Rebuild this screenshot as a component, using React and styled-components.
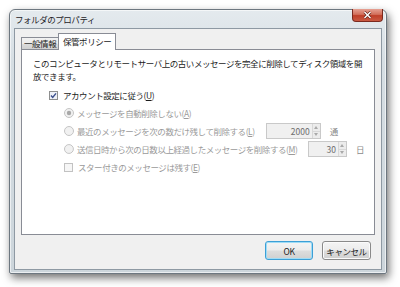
import React from 'react'
import styled, { createGlobalStyle } from 'styled-components'

const Global = createGlobalStyle`
  html, body {
    margin: 0;
    padding: 0;
    background: #ffffff;
  }
  body {
    font-family: "Noto Sans CJK JP", "Noto Sans", sans-serif;
    font-size: 8.5px;
    letter-spacing: -0.45px;
    color: #1b1b1b;
  }
`

const Stage = styled.div`
  width: 400px;
  height: 287px;
  padding: 9px 0 0 9px;
  box-sizing: border-box;
  overflow: hidden;
`

const Frame = styled.div`
  width: 378px;
  height: 265px;
  box-sizing: border-box;
  border: 1px solid #6d7780;
  border-radius: 6px 6px 2px 2px;
  background: linear-gradient(180deg, #e4eaee 0%, #d6dee3 20%, #ccd5db 100%);
  box-shadow: 2px 4px 9px rgba(0, 0, 0, 0.55), inset 0 0 0 1px rgba(255, 255, 255, 0.6);
  padding: 0 4px 3px 4px;
  display: flex;
  flex-direction: column;
`

const TitleBar = styled.div`
  height: 18px;
  display: flex;
  justify-content: space-between;
  align-items: flex-start;
`

const Title = styled.span`
  padding: 3px 0 0 1px;
  line-height: 13px;
  color: #1e2328;
  white-space: nowrap;
`

const CloseButton = styled.div`
  width: 31px;
  height: 13px;
  margin: -1px -1px 0 0;
  box-sizing: border-box;
  border: 1px solid #7b2a1f;
  border-top: none;
  border-radius: 0 0 4px 4px;
  background: linear-gradient(180deg, #e6a193 0%, #d2705c 45%, #bf3f29 55%, #c95a43 100%);
  display: flex;
  align-items: center;
  justify-content: center;
`

const Client = styled.div`
  flex: 1;
  background: #f0f0f0;
  border: 1px solid #8e99a3;
  padding: 5px 6px 0 6px;
  display: flex;
  flex-direction: column;
`

const TabRow = styled.div`
  display: flex;
  align-items: flex-end;
  height: 16px;
  margin-bottom: -1px;
  position: relative;
  z-index: 1;
`

const Tab = styled.div`
  box-sizing: border-box;
  height: ${(p) => (p.$active ? '17px' : '13px')};
  width: ${(p) => p.$w}px;
  border: 1px solid #898c95;
  border-bottom: ${(p) => (p.$active ? 'none' : '1px solid #898c95')};
  margin-right: ${(p) => (p.$active ? '0' : '-1px')};
  background: ${(p) => (p.$active ? '#ffffff' : 'linear-gradient(180deg, #f2f2f2 0%, #ebebeb 50%, #dddddd 51%, #cfcfcf 100%)')};
  line-height: ${(p) => (p.$active ? '14px' : '11px')};
  padding-left: ${(p) => (p.$active ? '4px' : '2px')};
  white-space: nowrap;
  overflow: hidden;
  color: #1b1b1b;
`

const Panel = styled.div`
  height: 186px;
  box-sizing: border-box;
  background: #ffffff;
  border: 1px solid #898c95;
  padding: 7px 10px 0 11px;
`

const Intro = styled.p`
  margin: 0;
  line-height: 13px;
  width: 336px;
`

const Options = styled.div`
  margin: 3px 0 0 16px;
  display: flex;
  flex-direction: column;
`

const Row = styled.div`
  height: 18px;
  display: flex;
  align-items: center;
  padding-left: ${(p) => (p.$indent ? '15px' : '0')};
  color: ${(p) => (p.$disabled ? '#9a9a9a' : '#1b1b1b')};
`

const Label = styled.span`
  margin-left: ${(p) => p.$gap || 3}px;
  margin-right: 11px;
  white-space: nowrap;
`

const Key = styled.span`
  text-decoration: underline;
`

const SpinBox = styled.div`
  box-sizing: border-box;
  width: ${(p) => p.$w}px;
  height: 16px;
  border: 1px solid #c9c9c9;
  background: #f0f0f0;
  display: flex;
`

const SpinValue = styled.div`
  flex: 1;
  text-align: right;
  padding-right: 2px;
  line-height: 14px;
  color: #6d6d6d;
  letter-spacing: 0;
`

const SpinArrows = styled.div`
  width: 7px;
  display: flex;
  flex-direction: column;
  border-left: 1px solid #d8d8d8;
`

const Arrow = styled.div`
  flex: 1;
  display: flex;
  align-items: center;
  justify-content: center;
  background: #ececec;
  border-bottom: ${(p) => (p.$up ? '1px solid #d8d8d8' : 'none')};
`

const Unit = styled.span`
  margin-left: 9px;
  color: #8a8a8a;
`

const ButtonRow = styled.div`
  display: flex;
  justify-content: flex-end;
  gap: 9px;
  margin-top: 6px;
  padding-right: 4px;
`

const Button = styled.div`
  box-sizing: border-box;
  width: ${(p) => p.$w}px;
  height: 19px;
  border: 1px solid ${(p) => (p.$default ? '#3c9fd6' : '#8a8a8a')};
  border-radius: 3px;
  background: linear-gradient(180deg, #f4f4f4 0%, #ececec 48%, #dddddd 52%, #d0d0d0 100%);
  box-shadow: ${(p) => (p.$default ? 'inset 0 0 0 1px #9fdcf6' : 'inset 0 0 0 1px #fbfbfb')};
  display: flex;
  align-items: center;
  justify-content: center;
  color: #1b1b1b;
  white-space: nowrap;
`

const CheckBox = ({ checked }) => (
  <svg width="9" height="9" viewBox="0 0 9 9">
    <rect x="0.5" y="0.5" width="8" height="8" fill={checked ? '#eef1f8' : '#f6f6f6'} stroke={checked ? '#8e8f8f' : '#c2c2c2'} />
    {checked && <path d="M2 4.6 L3.7 6.4 L7 2.4" fill="none" stroke="#3b4f8c" strokeWidth="1.4" />}
  </svg>
)

const Radio = ({ checked }) => (
  <svg width="10" height="10" viewBox="0 0 10 10">
    <circle cx="5" cy="5" r="4.5" fill="#f1f1f1" stroke="#c4c4c4" />
    {checked && <circle cx="5" cy="5" r="2.2" fill="#a8a8a8" />}
  </svg>
)

const Tri = ({ up }) => (
  <svg width="4" height="3" viewBox="0 0 4 3">
    <path d={up ? 'M0 3 L2 0 L4 3 Z' : 'M0 0 L2 3 L4 0 Z'} fill="#a9a9a9" />
  </svg>
)

const Spin = ({ value, w }) => (
  <SpinBox $w={w}>
    <SpinValue>{value}</SpinValue>
    <SpinArrows>
      <Arrow $up><Tri up /></Arrow>
      <Arrow><Tri /></Arrow>
    </SpinArrows>
  </SpinBox>
)

export default function App() {
  return (
    <Stage>
      <Global />
      <Frame>
        <TitleBar>
          <Title>フォルダのプロパティ</Title>
          <CloseButton>
            <svg width="9" height="8" viewBox="0 0 9 8">
              <path d="M1.5 1 L7.5 7 M7.5 1 L1.5 7" stroke="#5a1a10" strokeWidth="2.6" />
              <path d="M1.5 1 L7.5 7 M7.5 1 L1.5 7" stroke="#ffffff" strokeWidth="1.5" />
            </svg>
          </CloseButton>
        </TitleBar>
        <Client>
          <TabRow>
            <Tab $w={38}>一般情報</Tab>
            <Tab $w={58} $active>保管ポリシー</Tab>
          </TabRow>
          <Panel>
            <Intro>このコンピュータとリモートサーバ上の古いメッセージを完全に削除してディスク領域を開放できます。</Intro>
            <Options>
              <Row>
                <CheckBox checked />
                <Label $gap={5}>アカウント設定に従う(<Key>U</Key>)</Label>
              </Row>
              <Row $indent $disabled>
                <Radio checked />
                <Label>メッセージを自動削除しない(<Key>A</Key>)</Label>
              </Row>
              <Row $indent $disabled>
                <Radio />
                <Label>最近のメッセージを次の数だけ残して削除する(<Key>L</Key>)</Label>
                <Spin value="2000" w={55} />
                <Unit>通</Unit>
              </Row>
              <Row $indent $disabled>
                <Radio />
                <Label>送信日時から次の日数以上経過したメッセージを削除する(<Key>M</Key>)</Label>
                <Spin value="30" w={39} />
                <Unit>日</Unit>
              </Row>
              <Row $indent $disabled>
                <CheckBox />
                <Label $gap={5}>スター付きのメッセージは残す(<Key>E</Key>)</Label>
              </Row>
            </Options>
          </Panel>
          <ButtonRow>
            <Button $w={48} $default>OK</Button>
            <Button $w={49}>キャンセル</Button>
          </ButtonRow>
        </Client>
      </Frame>
    </Stage>
  )
}
